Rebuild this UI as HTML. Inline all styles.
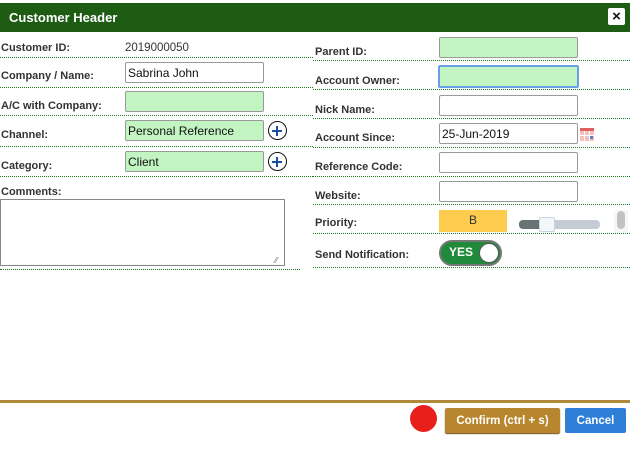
<!DOCTYPE html>
<html><head><meta charset="utf-8"><style>
*{box-sizing:border-box;margin:0;padding:0}
body{width:630px;height:450px;background:#fff;font-family:"Liberation Sans",Arial,sans-serif;position:relative;overflow:hidden}
.a{position:absolute}
.hd{left:0;top:3px;width:630px;height:29px;background:#1e5c14;color:#fff;font-weight:bold;font-size:13px;line-height:29px;padding-left:9px}
.x{left:608px;top:8px;width:17px;height:17px;background:#fff;border-radius:2px;color:#111;font-size:15px;font-weight:bold;text-align:center;line-height:17px}
.lb{font-size:11px;font-weight:bold;color:#333;white-space:nowrap}
.ln{height:0;border-top:1px dotted #1a7a1a}
.in{height:21px;border:1px solid #999;border-radius:2px;background:#fff;font-size:12px;color:#111;line-height:20px;padding-left:2px}
.g{background:#c3f5c3}
.pl{width:19px;height:19px;border:1.5px solid #111;border-radius:50%}
.pl:before{content:"";position:absolute;left:3px;top:7.5px;width:10px;height:2px;background:#1d4fa0}
.pl:after{content:"";position:absolute;left:7px;top:3.5px;width:2px;height:10px;background:#1d4fa0}
</style></head><body>
<div class="a hd">Customer Header</div>
<div class="a x">×</div>

<div class="a lb" style="left:1px;top:42px">Customer ID:</div>
<div class="a" style="left:125px;top:42px;font-size:11.5px;color:#333">2019000050</div>
<div class="a ln" style="left:0;top:57px;width:313px"></div>
<div class="a lb" style="left:1px;top:70px">Company / Name:</div>
<div class="a in" style="left:125px;top:62px;width:139px">Sabrina John</div>
<div class="a ln" style="left:0;top:87px;width:313px"></div>
<div class="a lb" style="left:1px;top:100px">A/C with Company:</div>
<div class="a in g" style="left:125px;top:91px;width:139px"></div>
<div class="a ln" style="left:0;top:115px;width:313px"></div>
<div class="a lb" style="left:1px;top:129px">Channel:</div>
<div class="a in g" style="left:125px;top:120px;width:139px">Personal Reference</div>
<div class="a pl" style="left:268px;top:121px"></div>
<div class="a ln" style="left:0;top:146px;width:313px"></div>
<div class="a lb" style="left:1px;top:160px">Category:</div>
<div class="a in g" style="left:125px;top:151px;width:139px">Client</div>
<div class="a pl" style="left:268px;top:152px"></div>
<div class="a ln" style="left:0;top:176px;width:313px"></div>
<div class="a lb" style="left:1px;top:186px">Comments:</div>
<div class="a" style="left:0;top:199px;width:285px;height:67px;border:1px solid #888"></div>
<div class="a" style="left:275px;top:256px;font-size:8px;color:#777">⁄⁄</div>
<div class="a ln" style="left:0;top:269px;width:300px"></div>

<div class="a lb" style="left:315px;top:46px">Parent ID:</div>
<div class="a in g" style="left:439px;top:37px;width:139px"></div>
<div class="a ln" style="left:313px;top:60px;width:317px"></div>
<div class="a lb" style="left:315px;top:75px">Account Owner:</div>
<div class="a in g" style="left:438px;top:65px;width:141px;height:23px;border:2px solid #6aa0e8"></div>
<div class="a ln" style="left:313px;top:89px;width:317px"></div>
<div class="a lb" style="left:315px;top:104px">Nick Name:</div>
<div class="a in" style="left:439px;top:95px;width:139px"></div>
<div class="a ln" style="left:313px;top:118px;width:317px"></div>
<div class="a lb" style="left:315px;top:132px">Account Since:</div>
<div class="a in" style="left:439px;top:123px;width:139px">25-Jun-2019</div>
<svg class="a" style="left:580px;top:128px" width="14" height="13" viewBox="0 0 14 13"><rect x="0" y="0" width="14" height="13" fill="#f3c0c0"/><rect x="0" y="0" width="14" height="3" fill="#e06060"/><g stroke="#fff" stroke-width="1"><line x1="4.5" y1="3" x2="4.5" y2="13"/><line x1="9.5" y1="3" x2="9.5" y2="13"/><line x1="0" y1="7.5" x2="14" y2="7.5"/></g><rect x="10" y="8" width="3" height="3" fill="#5a7ad0"/></svg>
<div class="a ln" style="left:313px;top:147px;width:317px"></div>
<div class="a lb" style="left:315px;top:161px">Reference Code:</div>
<div class="a in" style="left:439px;top:152px;width:139px"></div>
<div class="a ln" style="left:313px;top:176px;width:317px"></div>
<div class="a lb" style="left:315px;top:190px">Website:</div>
<div class="a in" style="left:439px;top:181px;width:139px"></div>
<div class="a ln" style="left:313px;top:204px;width:317px"></div>
<div class="a lb" style="left:315px;top:217px">Priority:</div>
<div class="a" style="left:439px;top:210px;width:68px;height:22px;background:#fdcb4e;font-size:12px;text-align:center;line-height:20px;color:#333">B</div>
<div class="a" style="left:519px;top:220px;width:81px;height:9px;border-radius:4px;background:#c5ccd3"></div>
<div class="a" style="left:519px;top:220px;width:22px;height:9px;border-radius:4px 0 0 4px;background:#6b7275"></div>
<div class="a" style="left:539px;top:217px;width:16px;height:15px;border:1px solid #c7d6dc;background:#f2f7fa;border-radius:2px"></div>
<div class="a" style="left:614px;top:210px;width:14px;height:23px;background:#f7f7f7"></div>
<div class="a" style="left:617px;top:211px;width:8px;height:18px;background:#c2c2c2;border-radius:4px"></div>
<div class="a ln" style="left:313px;top:233px;width:317px"></div>
<div class="a lb" style="left:315px;top:249px">Send Notification:</div>
<div class="a" style="left:439px;top:240px;width:63px;height:26px;border-radius:13px;background:#1f8a3a;border:2px solid #777"></div>
<div class="a" style="left:449px;top:245px;font-size:12px;font-weight:bold;color:#fff">YES</div>
<div class="a" style="left:479px;top:243px;width:20px;height:20px;border-radius:50%;background:#fff;border:1px solid #555"></div>
<div class="a ln" style="left:313px;top:267px;width:317px"></div>

<div class="a" style="left:0;top:400px;width:630px;height:3px;background:#b0893a"></div>
<div class="a" style="left:410px;top:405px;width:27px;height:27px;border-radius:50%;background:#e8201c"></div>
<div class="a" style="left:445px;top:408px;width:115px;height:25px;background:#b8862e;border-radius:2px;color:#fff;font-weight:bold;font-size:11.5px;text-align:center;line-height:27px;box-shadow:0 1px 1px #6a4b10">Confirm (ctrl + s)</div>
<div class="a" style="left:565px;top:408px;width:61px;height:25px;background:#2f7fd8;border-radius:2px;color:#fff;font-weight:bold;font-size:11.5px;text-align:center;line-height:27px">Cancel</div>
</body></html>
